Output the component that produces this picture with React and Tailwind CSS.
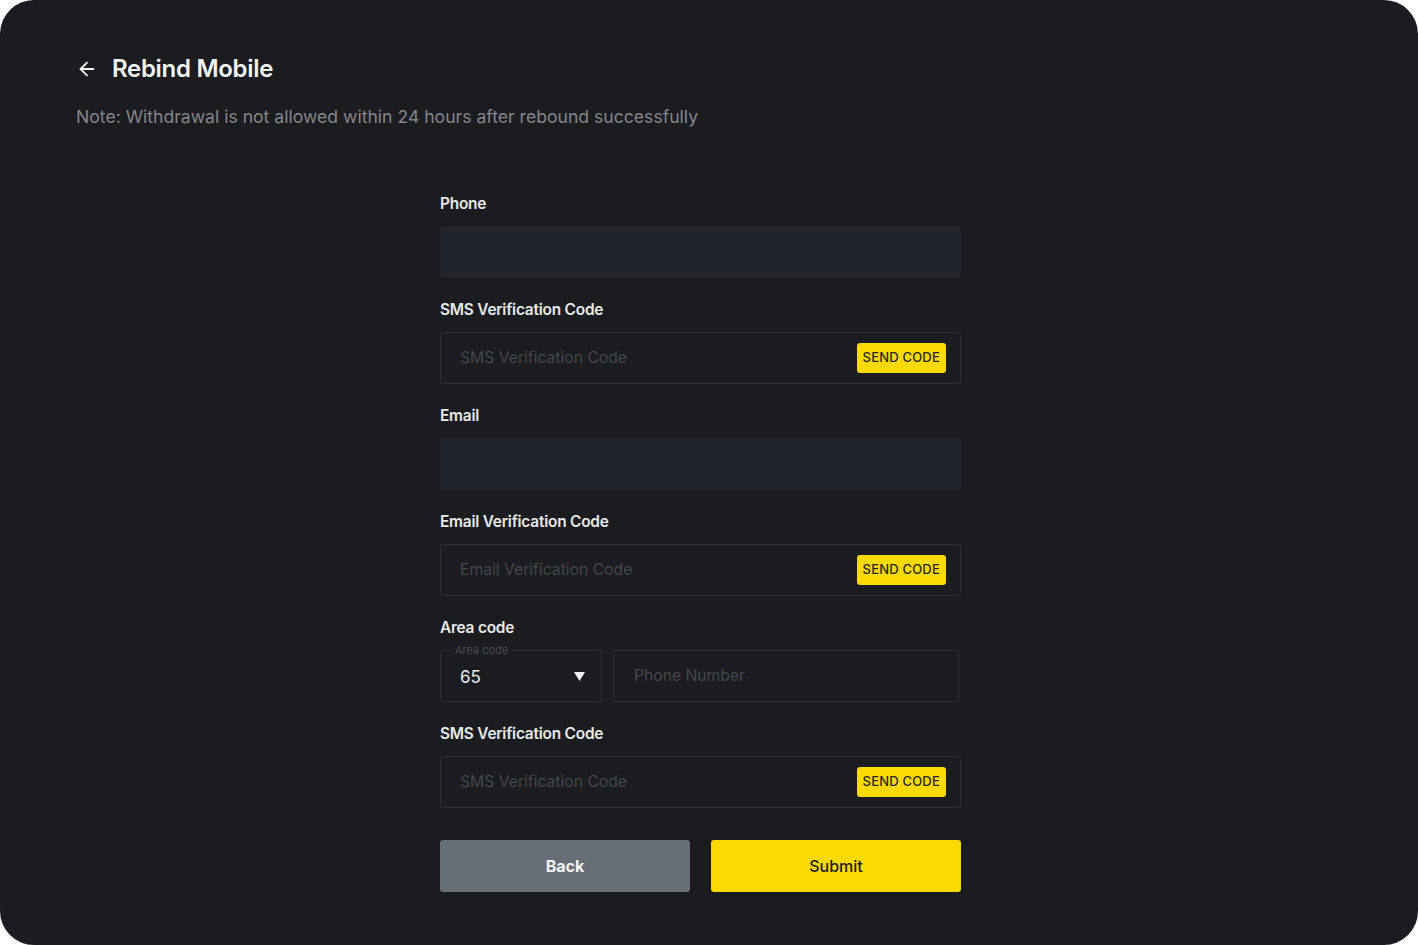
import React, { useState } from 'react';

const Label = ({ children }) => (
  <div className="text-[15.4px] leading-[22px] font-semibold text-[#eaeaec] mb-[11px] tracking-[-0.2px]">{children}</div>
);

const CodeField = ({ placeholder }) => (
  <div className="h-[52px] border border-[#2e3037] rounded-[3px] flex items-center pl-[19px] pr-[14px]">
    <input
      placeholder={placeholder}
      className="flex-1 bg-transparent outline-none text-[15.7px] text-[#eaeaec] placeholder:text-[#45474d]"
    />
    <button className="h-[30px] px-[6px] rounded-[3px] bg-[#fcd900] text-[13px] font-medium text-[#2a2a20] tracking-[0.2px]">
      SEND CODE
    </button>
  </div>
);

export default function App() {
  const [area] = useState('65');

  return (
    <div className="w-[1418px] h-[945px] bg-white" style={{ fontFamily: 'Inter, "Liberation Sans", sans-serif' }}>
      <div className="w-full h-full bg-[#1b1c20] rounded-[34px] pt-[54px] pl-[76px]">
        <div className="flex items-center gap-[14px]">
          <svg width="22" height="22" viewBox="0 0 24 24" fill="none" stroke="#f2f2f2" strokeWidth="2" strokeLinecap="round" strokeLinejoin="round">
            <path d="M19 12H5" />
            <path d="M12 19l-7-7 7-7" />
          </svg>
          <h1 className="text-[24px] leading-[30px] font-semibold text-[#f4f4f5] tracking-[-0.3px]">Rebind Mobile</h1>
        </div>
        <p className="mt-[21px] text-[17.6px] leading-[24px] text-[#85868b]">
          Note: Withdrawal is not allowed within 24 hours after rebound successfully
        </p>

        <div className="w-[521px] ml-[364px] mt-[64px]">
          <Label>Phone</Label>
          <div className="h-[52px] bg-[#22242b] rounded-[2px] mb-[21px]" />

          <Label>SMS Verification Code</Label>
          <div className="mb-[21px]"><CodeField placeholder="SMS Verification Code" /></div>

          <Label>Email</Label>
          <div className="h-[52px] bg-[#22242b] rounded-[2px] mb-[21px]" />

          <Label>Email Verification Code</Label>
          <div className="mb-[21px]"><CodeField placeholder="Email Verification Code" /></div>

          <Label>Area code</Label>
          <div className="flex gap-[11px] mb-[21px]">
            <div className="relative w-[162px] h-[52px] border border-[#2e3037] rounded-[3px] flex items-center pl-[19px] pr-[16px]">
              <span className="absolute -top-[8px] left-[10px] px-[4px] bg-[#1b1c20] text-[11px] leading-[14px] text-[#4a4c52]">Area code</span>
              <span className="flex-1 text-[17px] text-[#eeeeef] pt-[4px]">{area}</span>
              <svg width="11" height="9" viewBox="0 0 11 9">
                <path d="M0 0h11L5.5 9z" fill="#f2f2f2" />
              </svg>
            </div>
            <div className="flex-1 mr-[2px] h-[52px] border border-[#2e3037] rounded-[3px] flex items-center pl-[20px]">
              <input
                placeholder="Phone Number"
                className="w-full bg-transparent outline-none text-[15.7px] text-[#eaeaec] placeholder:text-[#45474d]"
              />
            </div>
          </div>

          <Label>SMS Verification Code</Label>
          <div className="mb-[32px]"><CodeField placeholder="SMS Verification Code" /></div>

          <div className="flex gap-[21px]">
            <button className="flex-1 h-[52px] rounded-[3px] bg-[#686e78] text-[16px] font-bold text-[#f4f4f5]">Back</button>
            <button className="flex-1 h-[52px] rounded-[3px] bg-[#fcd900] text-[16px] font-medium text-[#1b1c20]">Submit</button>
          </div>
        </div>
      </div>
    </div>
  );
}
